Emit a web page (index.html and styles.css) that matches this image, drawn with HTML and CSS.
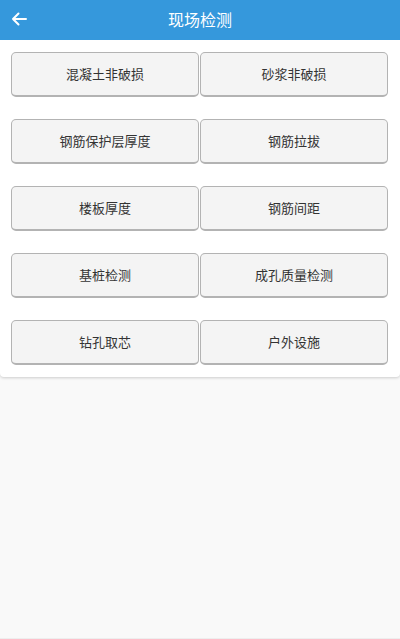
FILE: index.html
```html
<!DOCTYPE html>
<html lang="zh">
<head>
    <meta charset="UTF-8">
    <meta name="viewport" content="width=device-width, initial-scale=1.0">
    <title>现场检测</title>
    <link rel="stylesheet" href="styles.css">
</head>
<body>
    <div class="header">
        <span class="back">
            <svg width="16" height="14" viewBox="0 0 16 14">
                <path d="M15 7H2M7.5 1.5L2 7l5.5 5.5" fill="none" stroke="#fff" stroke-width="2" stroke-linecap="round" stroke-linejoin="round"/>
            </svg>
        </span>
        <h1 class="title">现场检测</h1>
    </div>

    <div class="card">
        <button class="btn">混凝土非破损</button>
        <button class="btn">砂浆非破损</button>
        <button class="btn">钢筋保护层厚度</button>
        <button class="btn">钢筋拉拔</button>
        <button class="btn">楼板厚度</button>
        <button class="btn">钢筋间距</button>
        <button class="btn">基桩检测</button>
        <button class="btn">成孔质量检测</button>
        <button class="btn">钻孔取芯</button>
        <button class="btn">户外设施</button>
    </div>
</body>
</html>
```

FILE: styles.css
```css
body {
    margin: 0;
    height: 639px;
    background: #f9f9f9;
    font-family: Roboto, "Noto Sans CJK SC", sans-serif;
    border-bottom: 1px solid #eeeeee;
    box-sizing: border-box;
}

.header {
    height: 40px;
    background: #3598dc;
    display: flex;
    align-items: center;
    justify-content: center;
    position: relative;
}

.back {
    position: absolute;
    left: 11px;
    top: 12px;
    display: flex;
}

.title {
    margin: 0 0 2px;
    color: #fff;
    font-size: 16px;
    font-weight: normal;
}

.card {
    background: #fff;
    display: grid;
    grid-template-columns: 1fr 1fr;
    column-gap: 1px;
    row-gap: 22px;
    padding: 12px 12px 12px 11px;
    border-radius: 0 0 4px 4px;
    box-shadow: 0 1px 3px rgba(0, 0, 0, 0.18);
}

.btn {
    height: 45px;
    background: #f4f4f4;
    border: 1.5px solid #b3b3b3;
    border-bottom-width: 2px;
    border-radius: 5px;
    font-family: inherit;
    font-size: 13px;
    color: #333;
    padding: 0 0 2px;
}
```
